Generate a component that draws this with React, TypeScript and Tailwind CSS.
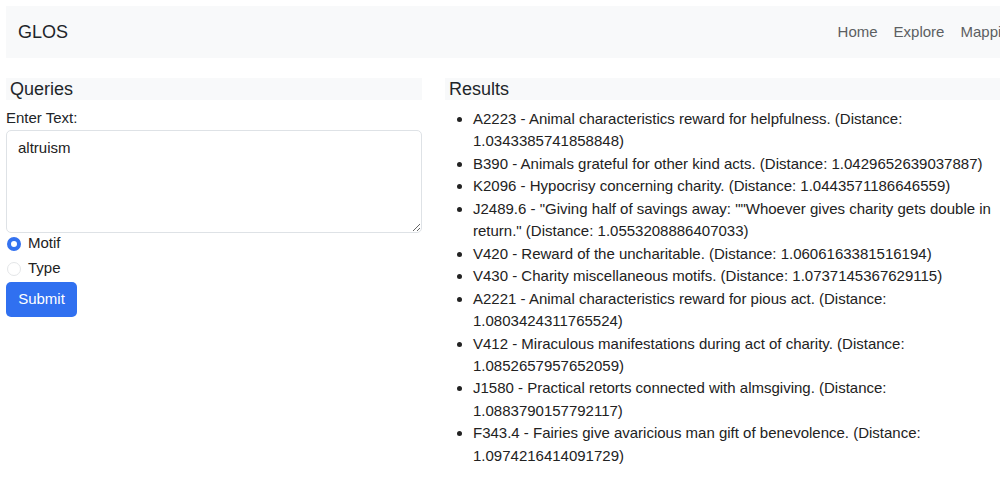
const RESULTS: string[] = [
  "A2223 - Animal characteristics reward for helpfulness. (Distance: 1.0343385741858848)",
  "B390 - Animals grateful for other kind acts. (Distance: 1.0429652639037887)",
  "K2096 - Hypocrisy concerning charity. (Distance: 1.0443571186646559)",
  'J2489.6 - "Giving half of savings away: ""Whoever gives charity gets double in return." (Distance: 1.0553208886407033)',
  "V420 - Reward of the uncharitable. (Distance: 1.0606163381516194)",
  "V430 - Charity miscellaneous motifs. (Distance: 1.0737145367629115)",
  "A2221 - Animal characteristics reward for pious act. (Distance: 1.0803424311765524)",
  "V412 - Miraculous manifestations during act of charity. (Distance: 1.0852657957652059)",
  "J1580 - Practical retorts connected with almsgiving. (Distance: 1.0883790157792117)",
  "F343.4 - Fairies give avaricious man gift of benevolence. (Distance: 1.0974216414091729)",
];

function Radio({ label, checked }: { label: string; checked?: boolean }) {
  return (
    <label className="flex h-[25px] items-center gap-[7px]">
      {checked ? (
        <span className="ml-px box-border h-[14px] w-[14px] rounded-full border-[4px] border-[#3472f0] bg-white" />
      ) : (
        <span className="ml-px box-border h-[14px] w-[14px] rounded-full border border-[#e4e6e8] bg-white" />
      )}
      <span className="text-[15px] text-[#222]">{label}</span>
    </label>
  );
}

export default function App() {
  return (
    <div className="h-[487px] w-[1000px] overflow-hidden bg-white font-['Liberation_Sans',Arial,sans-serif] text-[#212529]">
      <div className="w-[1040px] p-[6px]">
        <nav className="flex h-[52px] items-center justify-between bg-[#f8f9fa] pl-[12px] pr-[16px]">
          <span className="text-[18px]">GLOS</span>
          <div className="flex gap-[16px] pt-[1px] text-[15px] text-[#5c5f62]">
            <span>Home</span>
            <span>Explore</span>
            <span>Mapping</span>
          </div>
        </nav>

        <div className="mt-[20px] flex gap-[23px]">
          <div className="w-[416px] shrink-0">
            <h2 className="h-[22px] bg-[#f8f9fa] pl-[4px] text-[18px] leading-[22px]">Queries</h2>
            <div className="mt-[10px] text-[15px] leading-[16px]">Enter Text:</div>
            <textarea
              defaultValue="altruism"
              className="mt-[4px] box-border block h-[103px] w-full resize-y rounded-[5px] border border-[#dee2e6] px-[11px] py-[8px] text-[15px] leading-[18px] text-[#222] outline-none"
            />
            <div className="mt-[-2px]">
              <Radio label="Motif" checked />
              <Radio label="Type" />
            </div>
            <button className="mt-[1px] h-[35px] w-[71px] rounded-[5px] bg-[#3070f0] text-[15px] text-white">
              Submit
            </button>
          </div>

          <div className="flex-1">
            <h2 className="h-[22px] bg-[#f8f9fa] pl-[4px] text-[18px] leading-[22px]">Results</h2>
            <ul className="mt-[8px] w-[565px] list-disc pl-[28px] text-[15px] leading-[22.45px] text-[#222]">
              {RESULTS.map((r) => (
                <li key={r}>{r}</li>
              ))}
            </ul>
          </div>
        </div>
      </div>
    </div>
  );
}
